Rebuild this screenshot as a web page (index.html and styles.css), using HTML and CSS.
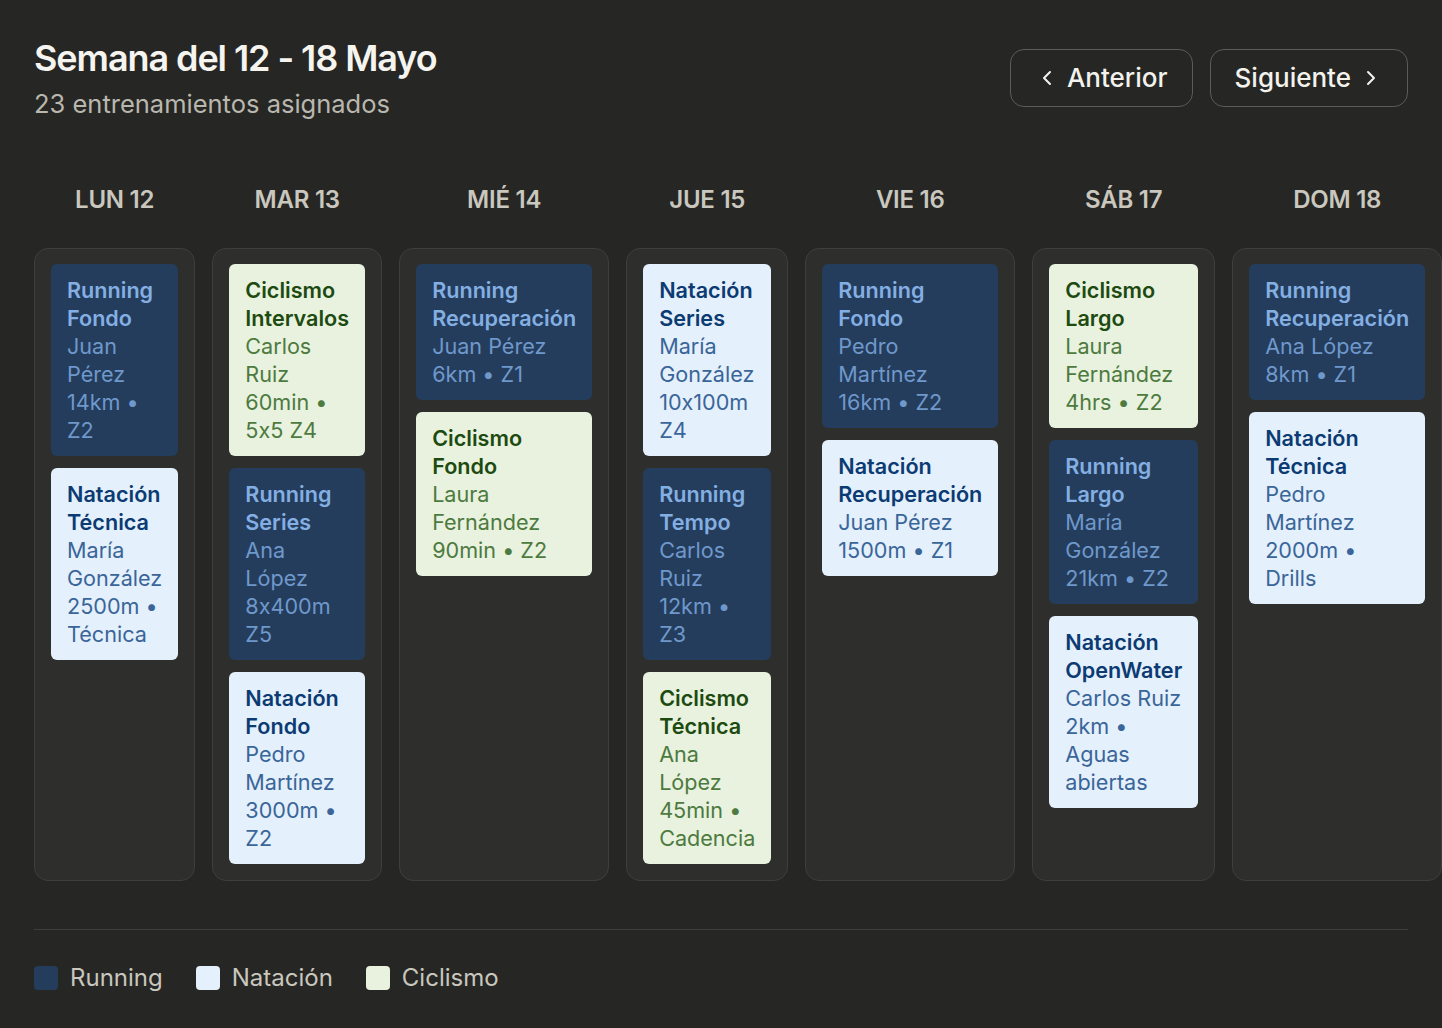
FILE: index.html
```html
<!DOCTYPE html>
<html lang="es">
<head>
    <meta charset="UTF-8">
    <meta name="viewport" content="width=device-width, initial-scale=1.0">
    <title>Semana del 12 - 18 Mayo</title>
    <link rel="stylesheet" href="styles.css">
</head>
<body>
    <div class="page">
        <header class="top">
            <div>
                <h1>Semana del 12 - 18 Mayo</h1>
                <p class="subtitle">23 entrenamientos asignados</p>
            </div>
            <div class="nav">
                <button class="nav-btn">
                    <svg width="24" height="24" viewBox="0 0 24 24"><path d="M15 6l-6 6 6 6" /></svg>
                    Anterior
                </button>
                <button class="nav-btn">
                    Siguiente
                    <svg width="24" height="24" viewBox="0 0 24 24"><path d="M9 6l6 6-6 6" /></svg>
                </button>
            </div>
        </header>

        <div class="week">
            <div class="day">
                <div class="day-name">LUN 12</div>
                <div class="day-box">
                    <div class="card running"><div class="card-title">Running Fondo</div><div>Juan Pérez</div><div>14km • Z2</div></div>
                    <div class="card swim"><div class="card-title">Natación Técnica</div><div>María González</div><div>2500m • Técnica</div></div>
                </div>
            </div>
            <div class="day">
                <div class="day-name">MAR 13</div>
                <div class="day-box">
                    <div class="card bike"><div class="card-title">Ciclismo Intervalos</div><div>Carlos Ruiz</div><div>60min • 5x5 Z4</div></div>
                    <div class="card running"><div class="card-title">Running Series</div><div>Ana López</div><div>8x400m Z5</div></div>
                    <div class="card swim"><div class="card-title">Natación Fondo</div><div>Pedro Martínez</div><div>3000m • Z2</div></div>
                </div>
            </div>
            <div class="day">
                <div class="day-name">MIÉ 14</div>
                <div class="day-box">
                    <div class="card running"><div class="card-title">Running Recuperación</div><div>Juan Pérez</div><div>6km • Z1</div></div>
                    <div class="card bike"><div class="card-title">Ciclismo Fondo</div><div>Laura Fernández</div><div>90min • Z2</div></div>
                </div>
            </div>
            <div class="day">
                <div class="day-name">JUE 15</div>
                <div class="day-box">
                    <div class="card swim"><div class="card-title">Natación Series</div><div>María González</div><div>10x100m Z4</div></div>
                    <div class="card running"><div class="card-title">Running Tempo</div><div>Carlos Ruiz</div><div>12km • Z3</div></div>
                    <div class="card bike"><div class="card-title">Ciclismo Técnica</div><div>Ana López</div><div>45min • Cadencia</div></div>
                </div>
            </div>
            <div class="day">
                <div class="day-name">VIE 16</div>
                <div class="day-box">
                    <div class="card running"><div class="card-title">Running Fondo</div><div>Pedro Martínez</div><div>16km • Z2</div></div>
                    <div class="card swim"><div class="card-title">Natación Recuperación</div><div>Juan Pérez</div><div>1500m • Z1</div></div>
                </div>
            </div>
            <div class="day">
                <div class="day-name">SÁB 17</div>
                <div class="day-box">
                    <div class="card bike"><div class="card-title">Ciclismo Largo</div><div>Laura Fernández</div><div>4hrs • Z2</div></div>
                    <div class="card running"><div class="card-title">Running Largo</div><div>María González</div><div>21km • Z2</div></div>
                    <div class="card swim"><div class="card-title">Natación OpenWater</div><div>Carlos Ruiz</div><div>2km • Aguas abiertas</div></div>
                </div>
            </div>
            <div class="day">
                <div class="day-name">DOM 18</div>
                <div class="day-box">
                    <div class="card running"><div class="card-title">Running Recuperación</div><div>Ana López</div><div>8km • Z1</div></div>
                    <div class="card swim"><div class="card-title">Natación Técnica</div><div>Pedro Martínez</div><div>2000m • Drills</div></div>
                </div>
            </div>
        </div>

        <footer class="legend">
            <div class="legend-item"><span class="swatch running"></span>Running</div>
            <div class="legend-item"><span class="swatch swim"></span>Natación</div>
            <div class="legend-item"><span class="swatch bike"></span>Ciclismo</div>
        </footer>
    </div>
</body>
</html>
```

FILE: styles.css
```css
html, body {
    margin: 0;
    overflow: hidden;
}
body {
    font-family: Inter, "Noto Sans", sans-serif;
    font-feature-settings: "calt" 0;
    background: #262624;
    color: #f3f2ed;
}
.page {
    padding: 36px 34px;
}
.top {
    display: flex;
    justify-content: space-between;
    align-items: center;
}
h1 {
    margin: 0;
    font-size: 36px;
    line-height: 44px;
    font-weight: 600;
    letter-spacing: -0.03em;
    color: #f5f4ef;
}
.subtitle {
    margin: 8px 0 0;
    font-size: 25.5px;
    line-height: 32px;
    color: #b9b7ae;
}
.nav {
    display: flex;
    gap: 17px;
    margin-top: -1px;
}
.nav-btn {
    display: flex;
    align-items: center;
    gap: 8px;
    height: 58px;
    padding: 0 24px;
    background: transparent;
    border: 1px solid #5b5b57;
    border-radius: 14px;
    color: #f3f2ed;
    font-family: inherit;
    font-size: 26px;
    font-weight: 500;
    cursor: pointer;
}
.nav-btn svg path {
    fill: none;
    stroke: currentColor;
    stroke-width: 2;
    stroke-linecap: round;
    stroke-linejoin: round;
}
.week {
    display: grid;
    grid-template-columns: repeat(7, 1fr);
    gap: 17px;
    margin-top: 60px;
}
.day {
    display: flex;
    flex-direction: column;
}
.day-name {
    text-align: center;
    font-size: 24px;
    line-height: 40px;
    font-weight: 600;
    letter-spacing: -0.01em;
    color: #c9c7be;
    margin-bottom: 28px;
}
.day-box {
    flex: 1;
    display: flex;
    flex-direction: column;
    gap: 12px;
    padding: 15px 16px 16px;
    background: #2e2e2c;
    border: 1px solid #3e3e3b;
    border-radius: 14px;
}
.card {
    padding: 12px 16px;
    border-radius: 6px;
    font-size: 21.6px;
    line-height: 28px;
}
.card-title {
    font-weight: 600;
}
.card.running {
    background: #243d5d;
    color: #6f98cb;
}
.card.running .card-title {
    color: #84afe3;
}
.card.swim {
    background: #e4f0fb;
    color: #3a6599;
}
.card.swim .card-title {
    color: #0c3b73;
}
.card.bike {
    background: #e8f2de;
    color: #4d7a3f;
}
.card.bike .card-title {
    color: #1d4a10;
}
.legend {
    display: flex;
    gap: 33px;
    margin-top: 48px;
    padding-top: 32px;
    border-top: 1px solid #3e3e3b;
}
.legend-item {
    display: flex;
    align-items: center;
    gap: 12px;
    font-size: 24px;
    line-height: 32px;
    color: #c9c7be;
}
.swatch {
    width: 24px;
    height: 24px;
    border-radius: 4px;
}
.swatch.running {
    background: #243d5d;
}
.swatch.swim {
    background: #e4f0fb;
}
.swatch.bike {
    background: #e8f2de;
}
```
